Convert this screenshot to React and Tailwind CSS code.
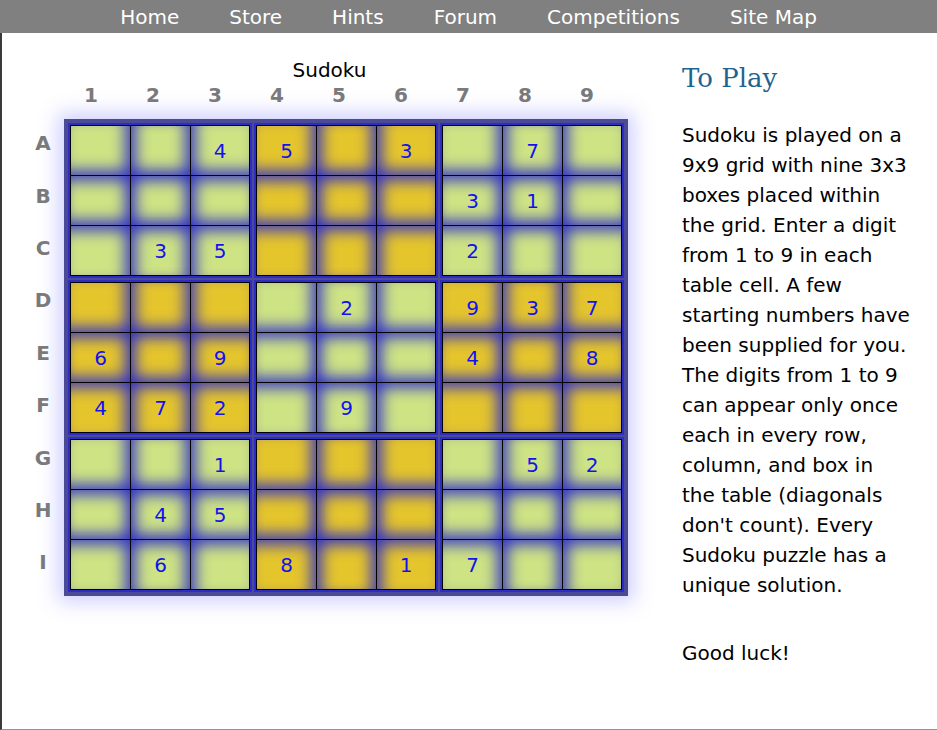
import React from "react";

const puzzle = [
  "__45_3_7_",
  "______31_",
  "_35___2__",
  "____2_937",
  "6_9___4_8",
  "472_9____",
  "__1____52",
  "_45______",
  "_6_8_17__",
];

const rowNames = ["A", "B", "C", "D", "E", "F", "G", "H", "I"];
const navItems = ["Home", "Store", "Hints", "Forum", "Competitions", "Site Map"];

// inset glow on the sides that face another cell in the same box
const cellShade = [
  "shadow-[inset_-14px_0_14px_-8px_rgba(48,48,200,0.8),inset_0_-14px_14px_-8px_rgba(48,48,200,0.8)]",
  "shadow-[inset_14px_0_14px_-8px_rgba(48,48,200,0.8),inset_-14px_0_14px_-8px_rgba(48,48,200,0.8),inset_0_-14px_14px_-8px_rgba(48,48,200,0.8)]",
  "shadow-[inset_14px_0_14px_-8px_rgba(48,48,200,0.8),inset_0_-14px_14px_-8px_rgba(48,48,200,0.8)]",
  "shadow-[inset_0_14px_14px_-8px_rgba(48,48,200,0.8),inset_-14px_0_14px_-8px_rgba(48,48,200,0.8),inset_0_-14px_14px_-8px_rgba(48,48,200,0.8)]",
  "shadow-[inset_0_14px_14px_-8px_rgba(48,48,200,0.8),inset_14px_0_14px_-8px_rgba(48,48,200,0.8),inset_-14px_0_14px_-8px_rgba(48,48,200,0.8),inset_0_-14px_14px_-8px_rgba(48,48,200,0.8)]",
  "shadow-[inset_0_14px_14px_-8px_rgba(48,48,200,0.8),inset_14px_0_14px_-8px_rgba(48,48,200,0.8),inset_0_-14px_14px_-8px_rgba(48,48,200,0.8)]",
  "shadow-[inset_0_14px_14px_-8px_rgba(48,48,200,0.8),inset_-14px_0_14px_-8px_rgba(48,48,200,0.8)]",
  "shadow-[inset_0_14px_14px_-8px_rgba(48,48,200,0.8),inset_14px_0_14px_-8px_rgba(48,48,200,0.8),inset_-14px_0_14px_-8px_rgba(48,48,200,0.8)]",
  "shadow-[inset_0_14px_14px_-8px_rgba(48,48,200,0.8),inset_14px_0_14px_-8px_rgba(48,48,200,0.8)]",
];

function Box({ boxIndex }) {
  const br = Math.floor(boxIndex / 3);
  const bc = boxIndex % 3;
  const yellow = (br + bc) % 2 === 1;
  const cells = [];
  for (let r = 0; r < 3; r++) {
    for (let c = 0; c < 3; c++) {
      const ch = puzzle[br * 3 + r][bc * 3 + c];
      cells.push(
        <div
          key={r * 3 + c}
          className={`h-[49px] flex items-center justify-center text-[20px] text-[#1212f0] ${
            yellow ? "bg-[#e5c52c]" : "bg-[#cee384]"
          } ${cellShade[r * 3 + c]}`}
        >
          {ch === "_" ? "" : ch}
        </div>
      );
    }
  }
  return (
    <div className="border-2 border-[#2d2dc6]">
      <div className="grid grid-cols-[59px_59px_58px] gap-px bg-black p-px">{cells}</div>
    </div>
  );
}

export default function App() {
  return (
    <div className="w-[937px] h-[730px] bg-white overflow-hidden" style={{ fontFamily: '"DejaVu Sans", Verdana, sans-serif' }}>
      <nav className="h-[33px] bg-[#808080] flex justify-center items-center">
        {navItems.map((item) => (
          <a key={item} className="px-[25px] text-[20px] text-white leading-[24px]">
            {item}
          </a>
        ))}
      </nav>

      <main className="h-[697px] border-l-2 border-l-[#3a3a3a] border-b border-b-[#a89a3a] flex">
        <section className="pl-[21px] pt-[25px]">
          <div className="w-[578px] pl-[35px] text-center text-[20px] leading-[24px] text-black">Sudoku</div>
          <div className="flex ml-[37px] mt-px">
            {[1, 2, 3, 4, 5, 6, 7, 8, 9].map((n) => (
              <div key={n} className="w-[62px] text-center text-[20px] leading-[24px] font-bold text-[#7a7a7a]">
                {n}
              </div>
            ))}
          </div>
          <div className="flex mt-[12px]">
            <div className="w-[40px] -mt-[2px]">
              {rowNames.map((name) => (
                <div key={name} className="h-[52.4px] flex items-center justify-center text-[20px] font-bold text-[#7a7a7a]">
                  {name}
                </div>
              ))}
            </div>
            <div className="ml-px self-start p-[4px] bg-[#4a4a96] shadow-[0_0_18px_6px_rgba(120,120,255,0.35)]">
              <div className="grid grid-cols-3 gap-[2px]">
                {[0, 1, 2, 3, 4, 5, 6, 7, 8].map((i) => (
                  <Box key={i} boxIndex={i} />
                ))}
              </div>
            </div>
          </div>
        </section>

        <aside className="ml-[54px] pt-[29px] text-black">
          <h2 className="text-[26px] leading-[32px] text-[#1f6391]" style={{ fontFamily: '"DejaVu Serif", Georgia, serif' }}>
            To Play
          </h2>
          <p className="mt-[26px] text-[20px] leading-[30px]">
            Sudoku is played on a<br />
            9x9 grid with nine 3x3<br />
            boxes placed within<br />
            the grid. Enter a digit<br />
            from 1 to 9 in each<br />
            table cell. A few<br />
            starting numbers have<br />
            been supplied for you.<br />
            The digits from 1 to 9<br />
            can appear only once<br />
            each in every row,<br />
            column, and box in<br />
            the table (diagonals<br />
            don't count). Every<br />
            Sudoku puzzle has a<br />
            unique solution.
          </p>
          <p className="mt-[38px] text-[20px] leading-[30px]">Good luck!</p>
        </aside>
      </main>
    </div>
  );
}
